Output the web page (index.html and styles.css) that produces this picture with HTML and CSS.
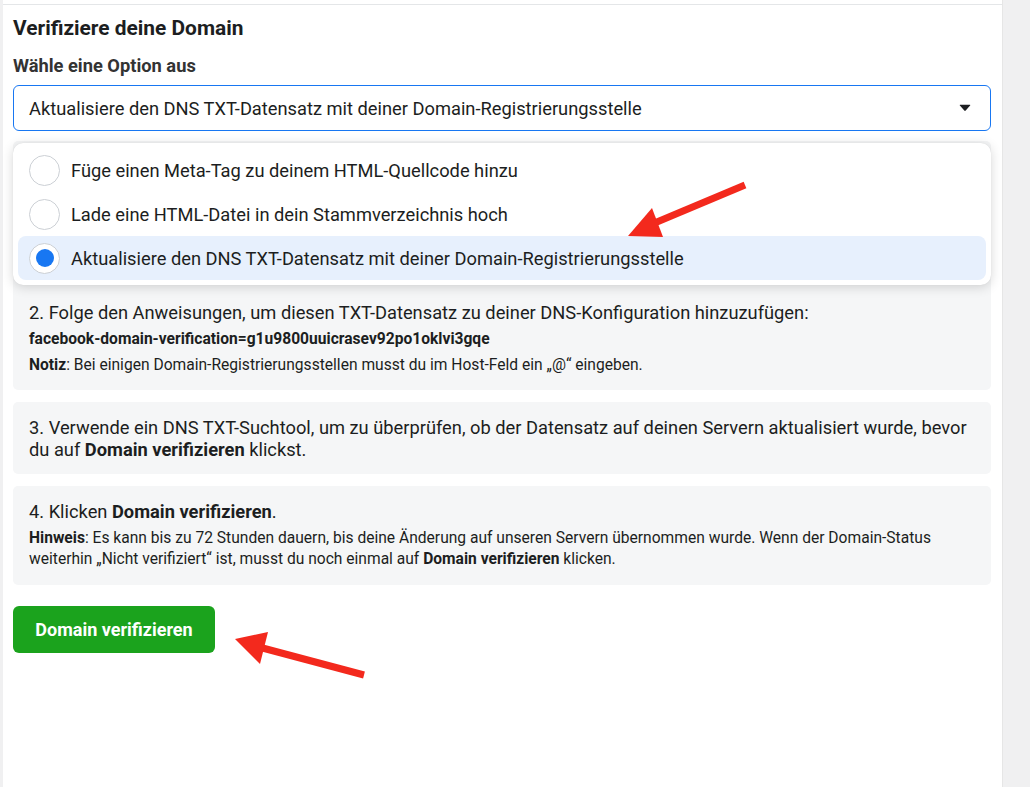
FILE: index.html
```html
<!DOCTYPE html>
<html lang="de">
<head>
<meta charset="utf-8">
<title>Verifiziere deine Domain</title>
<link rel="stylesheet" href="styles.css">
</head>
<body>
<div class="page">
  <div class="panel">
    <div class="topline"></div>
    <div class="content">
      <h1 class="title">Verifiziere deine Domain</h1>
      <div class="label">Wähle eine Option aus</div>
      <div class="select-wrap">
        <div class="select">
          <span>Aktualisiere den DNS TXT-Datensatz mit deiner Domain-Registrierungsstelle</span>
          <svg class="caret" width="12" height="8" viewBox="0 0 12 8"><path d="M1.2 0.8 H10.8 Q11.8 0.8 11.1 1.6 L6.7 6.6 Q6 7.4 5.3 6.6 L0.9 1.6 Q0.2 0.8 1.2 0.8 Z" fill="#1c1e21"/></svg>
        </div>
        <div class="menu">
          <div class="option"><span class="radio"></span><span>Füge einen Meta-Tag zu deinem HTML-Quellcode hinzu</span></div>
          <div class="option"><span class="radio"></span><span>Lade eine HTML-Datei in dein Stammverzeichnis hoch</span></div>
          <div class="option selected"><span class="radio"><span class="dot"></span></span><span>Aktualisiere den DNS TXT-Datensatz mit deiner Domain-Registrierungsstelle</span></div>
        </div>
      </div>
      <div class="step step2">
        <div class="step-main">2. Folge den Anweisungen, um diesen TXT-Datensatz zu deiner DNS-Konfiguration hinzuzufügen:</div>
        <div class="code">facebook-domain-verification=g1u9800uuicrasev92po1oklvi3gqe</div>
        <div class="note"><b>Notiz</b>: Bei einigen Domain-Registrierungsstellen musst du im Host-Feld ein „@“ eingeben.</div>
      </div>
      <div class="step step3">
        <div class="step-main">3. Verwende ein DNS TXT-Suchtool, um zu überprüfen, ob der Datensatz auf deinen Servern aktualisiert wurde, bevor du auf <b>Domain verifizieren</b> klickst.</div>
      </div>
      <div class="step step4">
        <div class="step-main">4. Klicken <b>Domain verifizieren</b>.</div>
        <div class="hint"><b>Hinweis</b>: Es kann bis zu 72 Stunden dauern, bis deine Änderung auf unseren Servern übernommen wurde. Wenn der Domain-Status weiterhin „Nicht verifiziert“ ist, musst du noch einmal auf <b>Domain verifizieren</b> klicken.</div>
      </div>
      <button class="verify">Domain verifizieren</button>
    </div>
  </div>
  <svg class="arrows" width="1030" height="787" viewBox="0 0 1030 787">
    <line x1="745" y1="185" x2="645" y2="227" stroke="#f3291d" stroke-width="7"/>
    <polygon points="628,236 652,208 663,237" fill="#f3291d"/>
    <line x1="364" y1="675" x2="255" y2="646" stroke="#f3291d" stroke-width="7"/>
    <polygon points="235,639 268,632 260,664" fill="#f3291d"/>
  </svg>
</div>
</body>
</html>
```
FILE: styles.css
```css
* { box-sizing: border-box; }
html, body { margin: 0; padding: 0; }
body {
  background: #f0f0f1;
  font-family: Roboto, "Liberation Sans", Arial, sans-serif;
  color: #1c1e21;
}
.page {
  position: relative;
  width: 1030px;
  height: 787px;
  overflow: hidden;
}
.panel {
  margin-left: 3px;
  width: 1000px;
  height: 787px;
  background: #fff;
  border-right: 1px solid #e6e6e6;
  padding-top: 4px;
}
.topline {
  height: 1px;
  background: #e4e6e8;
}
.content {
  padding: 11px 11px 0 10px;
}
.title {
  margin: 0;
  font-size: 20.9px;
  line-height: 24px;
  font-weight: 700;
}
.label {
  margin-top: 16px;
  font-size: 18.3px;
  line-height: 20px;
  font-weight: 700;
  color: #333;
}
.select-wrap {
  position: relative;
  margin-top: 9px;
  margin-bottom: 10px;
}
.select {
  height: 46px;
  border: 1px solid #1877f2;
  border-radius: 6px;
  padding: 0 19px 0 15px;
  display: flex;
  align-items: center;
  justify-content: space-between;
  font-size: 18.3px;
}
.caret { display: block; }
.menu {
  position: absolute;
  left: 0;
  right: 0;
  top: 58px;
  z-index: 2;
  background: #fff;
  border-radius: 10px;
  box-shadow: 0 2px 12px rgba(0,0,0,0.16), 0 0 1px rgba(0,0,0,0.1);
  padding: 5px;
}
.option {
  height: 44px;
  display: flex;
  align-items: center;
  padding-left: 11px;
  gap: 11px;
  font-size: 18.3px;
  border-radius: 8px;
}
.option.selected { background: #e7f0fd; }
.radio {
  width: 31px;
  height: 31px;
  border-radius: 50%;
  border: 1px solid #ccd0d5;
  background: #fff;
  display: flex;
  align-items: center;
  justify-content: center;
  flex: none;
}
.dot {
  width: 18px;
  height: 18px;
  border-radius: 50%;
  background: #1877f2;
}
.step {
  background: #f5f6f7;
  border-radius: 5px;
  padding: 15px 16px 13px;
  margin-bottom: 12px;
}
.step2 {
  padding-top: 161px;
  padding-bottom: 15px;
}
.step4 { padding-bottom: 15px; }
.step-main {
  font-size: 18.3px;
  line-height: 22px;
}
.code {
  margin-top: 5px;
  font-size: 15.6px;
  line-height: 20px;
  font-weight: 700;
}
.note {
  margin-top: 6px;
  font-size: 15.6px;
  line-height: 20px;
}
.hint {
  margin-top: 5px;
  font-size: 15.6px;
  line-height: 21px;
}
.verify {
  margin-top: 9px;
  width: 202px;
  height: 47px;
  border: none;
  border-radius: 6px;
  background: #1ba31d;
  color: #fff;
  font-family: inherit;
  font-size: 18px;
  font-weight: 700;
  padding: 0;
}
.arrows {
  position: absolute;
  left: 0;
  top: 0;
  pointer-events: none;
  z-index: 5;
}
```
